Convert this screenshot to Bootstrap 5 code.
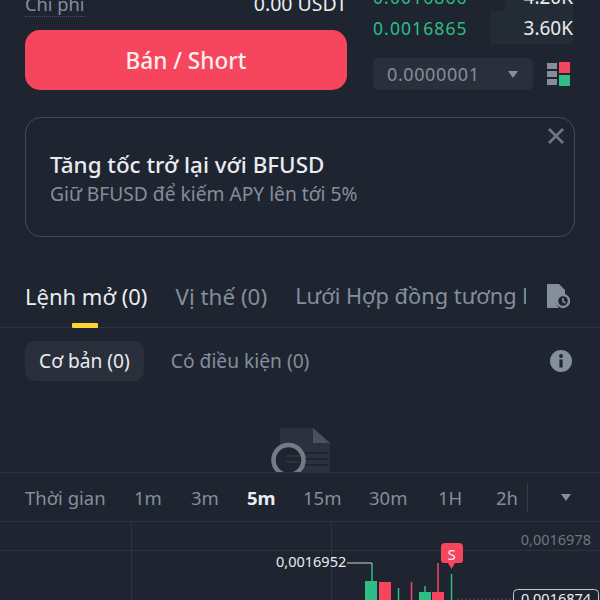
<!DOCTYPE html>
<html lang="vi">
<head>
    <meta charset="UTF-8">
    <meta name="viewport" content="width=device-width, initial-scale=1.0">
    <title>Bán / Short</title>
    <link href="https://cdn.jsdelivr.net/npm/bootstrap@5.3.0/dist/css/bootstrap.min.css" rel="stylesheet">
    <style>
        html, body { height: 600px; overflow: hidden; }
        body { background: #1e2530; color: #eaecef; font-family: "Noto Sans", "Liberation Sans", sans-serif; }
        .muted-text { color: #848e9c; }
        .trade-top { height: 126px; margin-top: -9px; padding: 0 27px 0 25px; }
        .order-col { width: 322px; }
        .fee-row { height: 39px; font-size: 18.3px; line-height: 26px; }
        .fee-row .fee-val { font-size: 19.5px; }
        .fee-label { height: 26px; border-bottom: 1px dotted #4b525d; }
        .sell-btn { height: 60px; background: #f6465d; border: 0; border-radius: 15px; color: #fdeef0; font-size: 22.6px; font-weight: 500; padding-top: 8px; }
        .sell-btn:hover { background: #f6465d; color: #fdeef0; }
        .book-col { width: 200px; margin-left: 26px; }
        .book-row { font-size: 19px; line-height: 26px; height: 33px; position: relative; }
        .book-row.first { height: 27px; margin-top: -7px; align-items: flex-start; }
        .depth-bar { position: absolute; right: 0; top: 0; bottom: 0; background: #232c35; }
        .book-row > span { position: relative; }
        .price-up { color: #2ebd85; font-size: 17.5px; letter-spacing: 1.1px; }
        .step-box { width: 160px; height: 32px; background: #2a303b; border-radius: 6px; padding: 0 14px; font-size: 18px; letter-spacing: .6px; }
        .step-row { margin-top: 14px; }
        .step-icon { margin-left: 14px; }
        .promo { height: 120px; margin: 0 25px; border: 1px solid #434a56; border-radius: 16px; padding: 3px 24px 0; position: relative; }
        .promo-title { font-size: 22.4px; line-height: 30px; font-weight: 500; color: #eaecef; }
        .promo-sub { font-size: 19.2px; line-height: 26px; margin-top: 1px; }
        .promo-close { position: absolute; top: 9px; right: 9px; }
        .tabs-bar { margin-top: 36px; height: 55px; padding: 0 25px 7px; border-bottom: 1px solid #2c333f; position: relative; font-size: 22px; white-space: nowrap; }
        .tabs-bar .tab-gap { margin-right: 28px; }
        .tabs-bar .tab-muted { font-size: 22.4px; }
        .tabs-bar .tab-clip { width: 231px; overflow: hidden; font-size: 21.8px; }
        .tab-mark { position: absolute; left: 72px; bottom: -1px; width: 26px; height: 5px; background: #fcd535; border-radius: 1px; }
        .tab-history { margin-left: 20px; margin-top: -2px; }
        .sub-tabs { padding: 13px 28px 0 25px; font-size: 19.2px; }
        .sub-chip { height: 40px; padding: 0 14px; background: #2a303b; border-radius: 10px; }
        .sub-other { margin-left: 27px; }
        .empty-box { height: 91px; overflow: hidden; padding-top: 47px; }
        .time-bar { height: 50px; border-top: 1px solid #2c333f; border-bottom: 1px solid #2c333f; font-size: 18.5px; padding: 0 25px; position: relative; }
        .time-bar span { position: absolute; top: 12px; line-height: 26px; }
        .time-sep { position: absolute; left: 527px; top: 10px; width: 1px; height: 30px; background: #363d49; }
        .time-caret { position: absolute; left: 560px; top: 20px; }
        .chart-area { height: 79px; display: block; }
        .chart-area text { font-family: "Noto Sans", "Liberation Sans", sans-serif; font-size: 14.5px; }
    </style>
</head>
<body>
    <div class="trade-top d-flex">
        <div class="order-col">
            <div class="fee-row d-flex justify-content-between">
                <span class="fee-label muted-text">Chi phí</span>
                <span class="fee-val">0.00 USDT</span>
            </div>
            <button type="button" class="btn sell-btn w-100">Bán / Short</button>
        </div>
        <div class="book-col">
            <div class="book-row first d-flex justify-content-between">
                <div class="depth-bar" style="width: 68px"></div>
                <span class="price-up">0.0016866</span>
                <span>4.20K</span>
            </div>
            <div class="book-row d-flex justify-content-between align-items-center">
                <div class="depth-bar" style="width: 83px"></div>
                <span class="price-up">0.0016865</span>
                <span>3.60K</span>
            </div>
            <div class="step-row d-flex align-items-center">
                <div class="step-box d-flex align-items-center justify-content-between muted-text">
                    0.0000001
                    <svg width="12" height="9" viewBox="0 0 12 9"><path d="M1 1h10L6 8z" fill="#848e9c"/></svg>
                </div>
                <svg class="step-icon" width="24" height="26" viewBox="0 0 24 26">
                    <rect x="0" y="2" width="10" height="6" fill="#848e9c"/>
                    <rect x="0" y="10" width="10" height="6" fill="#848e9c"/>
                    <rect x="0" y="18" width="10" height="6" fill="#848e9c"/>
                    <rect x="12" y="1" width="11" height="11" fill="#f6465d"/>
                    <rect x="12" y="14" width="11" height="11" fill="#2ebd85"/>
                </svg>
            </div>
        </div>
    </div>

    <div class="promo d-flex flex-column justify-content-center">
        <div class="promo-title">Tăng tốc trở lại với BFUSD</div>
        <div class="promo-sub muted-text">Giữ BFUSD để kiếm APY lên tới 5%</div>
        <svg class="promo-close" width="18" height="18" viewBox="0 0 18 18"><path d="M2 2l14 14M16 2L2 16" stroke="#6f7682" stroke-width="2.8"/></svg>
    </div>

    <div class="tabs-bar d-flex align-items-center">
        <span class="tab-gap">Lệnh mở (0)</span>
        <span class="muted-text tab-muted tab-gap">Vị thế (0)</span>
        <div class="tab-clip muted-text">Lưới Hợp đồng tương lai</div>
        <svg class="tab-history" width="24" height="26" viewBox="0 0 24 26">
            <path d="M1 1h12l6 6v6a7 7 0 0 0-6 12H1z" fill="#848e9c"/>
            <circle cx="17" cy="18" r="6" fill="#1e2530" stroke="#848e9c" stroke-width="2.4"/>
            <path d="M17 15v3.500l2.500 1.500" fill="none" stroke="#848e9c" stroke-width="1.600"/>
        </svg>
        <div class="tab-mark"></div>
    </div>

    <div class="sub-tabs d-flex align-items-center">
        <div class="sub-chip d-flex align-items-center">Cơ bản (0)</div>
        <div class="muted-text sub-other">Có điều kiện (0)</div>
        <svg class="ms-auto" width="22" height="22" viewBox="0 0 22 22">
            <circle cx="11" cy="11" r="11" fill="#848e9c"/>
            <circle cx="11" cy="6" r="1.900" fill="#1e2530"/>
            <rect x="9.400" y="9.500" width="3.200" height="8" fill="#1e2530"/>
        </svg>
    </div>

    <div class="empty-box d-flex justify-content-center">
        <svg width="62" height="44" viewBox="0 0 62 44">
            <path d="M11 0h33l17 15v29H11z" fill="#2c323d"/>
            <path d="M44 0l17 15H44z" fill="#4a505c"/>
            <path d="M36 25h24M36 31h24M36 37h24" stroke="#1e2530" stroke-width="2"/>
            <circle cx="19.500" cy="32" r="15" fill="#1e2530" stroke="#757b86" stroke-width="4.500"/>
            <path d="M17 28h14M17 34h14" stroke="#2c323d" stroke-width="2"/>
        </svg>
    </div>

    <div class="time-bar">
        <span class="muted-text" style="left: 25px">Thời gian</span>
        <span class="muted-text" style="left: 134px">1m</span>
        <span class="muted-text" style="left: 191px">3m</span>
        <span class="fw-bold" style="left: 247px">5m</span>
        <span class="muted-text" style="left: 303px">15m</span>
        <span class="muted-text" style="left: 369px">30m</span>
        <span class="muted-text" style="left: 438px">1H</span>
        <span class="muted-text" style="left: 496px">2h</span>
        <div class="time-sep"></div>
        <svg class="time-caret" width="12" height="9" viewBox="0 0 12 9"><path d="M1 1h10L6 8z" fill="#848e9c"/></svg>
    </div>

    <svg class="chart-area w-100" viewBox="0 0 600 79">
        <path d="M0 28.500H600" stroke="#2c333f"/>
        <path d="M131.500 0V79M331.500 0V79" stroke="#2c333f"/>
        <text x="591" y="23" text-anchor="end" fill="#6f7682">0,0016978</text>
        <text x="276" y="45" fill="#eaecef">0,0016952</text>
        <path d="M372 41v18" fill="none" stroke="#2ebd85" stroke-width="1.500"/>
        <path d="M347 41h25" stroke="#cfd3d8" stroke-width="1"/>
        <rect x="365" y="59" width="12" height="20" fill="#2ebd85"/>
        <rect x="379" y="60" width="12" height="19" fill="#f6465d"/>
        <path d="M398.500 66V79" stroke="#2ebd85" stroke-width="1.500"/>
        <path d="M411.500 60V79" stroke="#f6465d" stroke-width="1.500"/>
        <path d="M425 64V70" stroke="#2ebd85" stroke-width="1.500"/>
        <rect x="419" y="70" width="12" height="9" fill="#2ebd85"/>
        <path d="M438 41V70" stroke="#f6465d" stroke-width="1.500"/>
        <rect x="432" y="70" width="12" height="9" fill="#f6465d"/>
        <path d="M451.500 52V79" stroke="#2ebd85" stroke-width="1.500"/>
        <path d="M444 21h15a4 4 0 0 1 4 4v13a3 3 0 0 1-3 3h-5l-3.500 6-3.500-6h-4a3 3 0 0 1-3-3V25a4 4 0 0 1 4-4z" fill="#f6465d"/>
        <text x="451.500" y="38" text-anchor="middle" fill="#fdeef0" style="font-size: 15px">S</text>
        <path d="M457 77H512" stroke="#4b525d" stroke-dasharray="2 2"/>
        <rect x="513.500" y="67.500" width="85" height="24" rx="4" fill="#1e2530" stroke="#c3c7cc"/>
        <text x="556" y="82" text-anchor="middle" fill="#eaecef">0,0016874</text>
    </svg>

    <script src="https://cdn.jsdelivr.net/npm/bootstrap@5.3.0/dist/js/bootstrap.bundle.min.js"></script>
</body>
</html>
